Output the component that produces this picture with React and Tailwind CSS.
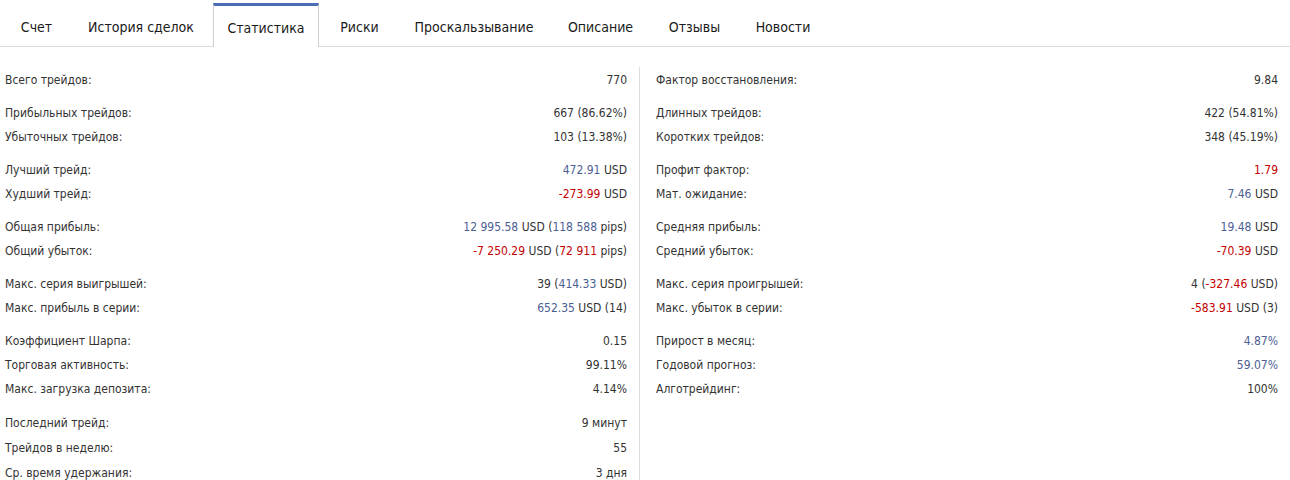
import React from 'react';

const tabs = [
  { label: 'Счет', w: 'w-[65px]' },
  { label: 'История сделок', w: 'w-[136px]' },
  { label: 'Статистика', w: 'w-[106px]', active: true },
  { label: 'Риски', w: 'w-[73px]' },
  { label: 'Проскальзывание', w: 'w-[148px]' },
  { label: 'Описание', w: 'w-[97px]' },
  { label: 'Отзывы', w: 'w-[83px]' },
  { label: 'Новости', w: 'w-[86px]' },
];

// value parts: [text, tone] where tone is 'b' (blue), 'r' (red) or undefined (dark)
const B = (t) => [t, 'b'];
const R = (t) => [t, 'r'];

const left = [
  [['Всего трейдов:', ['770']]],
  [
    ['Прибыльных трейдов:', ['667 (86.62%)']],
    ['Убыточных трейдов:', ['103 (13.38%)']],
  ],
  [
    ['Лучший трейд:', [B('472.91'), ' USD']],
    ['Худший трейд:', [R('-273.99'), ' USD']],
  ],
  [
    ['Общая прибыль:', [B('12 995.58'), ' USD (', B('118 588'), ' pips)']],
    ['Общий убыток:', [R('-7 250.29'), ' USD (', R('72 911'), ' pips)']],
  ],
  [
    ['Макс. серия выигрышей:', ['39 (', B('414.33'), ' USD)']],
    ['Макс. прибыль в серии:', [B('652.35'), ' USD (14)']],
  ],
  [
    ['Коэффициент Шарпа:', ['0.15']],
    ['Торговая активность:', ['99.11%']],
    ['Макс. загрузка депозита:', ['4.14%']],
  ],
  [
    ['Последний трейд:', ['9 минут']],
    ['Трейдов в неделю:', ['55']],
    ['Ср. время удержания:', ['3 дня']],
  ],
];

const right = [
  [['Фактор восстановления:', ['9.84']]],
  [
    ['Длинных трейдов:', ['422 (54.81%)']],
    ['Коротких трейдов:', ['348 (45.19%)']],
  ],
  [
    ['Профит фактор:', [R('1.79')]],
    ['Мат. ожидание:', [B('7.46'), ' USD']],
  ],
  [
    ['Средняя прибыль:', [B('19.48'), ' USD']],
    ['Средний убыток:', [R('-70.39'), ' USD']],
  ],
  [
    ['Макс. серия проигрышей:', ['4 (', R('-327.46'), ' USD)']],
    ['Макс. убыток в серии:', [R('-583.91'), ' USD (3)']],
  ],
  [
    ['Прирост в месяц:', [B('4.87%')]],
    ['Годовой прогноз:', [B('59.07%')]],
    ['Алготрейдинг:', ['100%']],
  ],
];

function Value({ parts }) {
  return (
    <span className="whitespace-pre text-[#333]">
      {parts.map((p, i) => {
        if (typeof p === 'string') return <span key={i}>{p}</span>;
        const [text, tone] = p;
        return (
          <span key={i} className={tone === 'b' ? 'text-[#4c5e93]' : 'text-[#c40000]'}>
            {text}
          </span>
        );
      })}
    </span>
  );
}

function Column({ groups }) {
  return (
    <div className="flex flex-col gap-[9px] pt-px">
      {groups.map((g, gi) => (
        <div key={gi} className="flex flex-col">
          {g.map(([label, parts]) => (
            <div
              key={label}
              className={`${gi === 6 ? 'h-[25px]' : 'h-6'} flex items-center justify-between`}
            >
              <span className="text-[#333]">{label}</span>
              <Value parts={parts} />
            </div>
          ))}
        </div>
      ))}
    </div>
  );
}

export default function App() {
  return (
    <div
      className="w-[1290px] h-[480px] overflow-hidden bg-white"
      style={{ fontFamily: '"DejaVu Sans Condensed", "DejaVu Sans", sans-serif' }}
    >
      {/* Tabs */}
      <div className="h-[47px] flex items-end gap-1 pl-1 border-b border-[#dcdcdc]">
        {tabs.map((t) => (
          <div
            key={t.label}
            className={`${t.w} shrink-0 flex items-center justify-center text-[14px] text-[#1a1a1a] ${
              t.active
                ? 'h-[44px] -mb-px bg-white border-x border-[#d0d0d0] border-t-[3px] border-t-[#4a6db3] pt-[3px]'
                : 'h-[44px] pt-[7px]'
            }`}
          >
            {t.label}
          </div>
        ))}
      </div>

      {/* Stats */}
      <div className="flex pt-5 text-[12px]">
        <div className="w-[639px] pl-[5px] pr-3">
          <Column groups={left} />
        </div>
        <div className="flex-1 border-l border-[#dcdcdc] pl-4 pr-3 h-[420px]">
          <Column groups={right} />
        </div>
      </div>
    </div>
  );
}
